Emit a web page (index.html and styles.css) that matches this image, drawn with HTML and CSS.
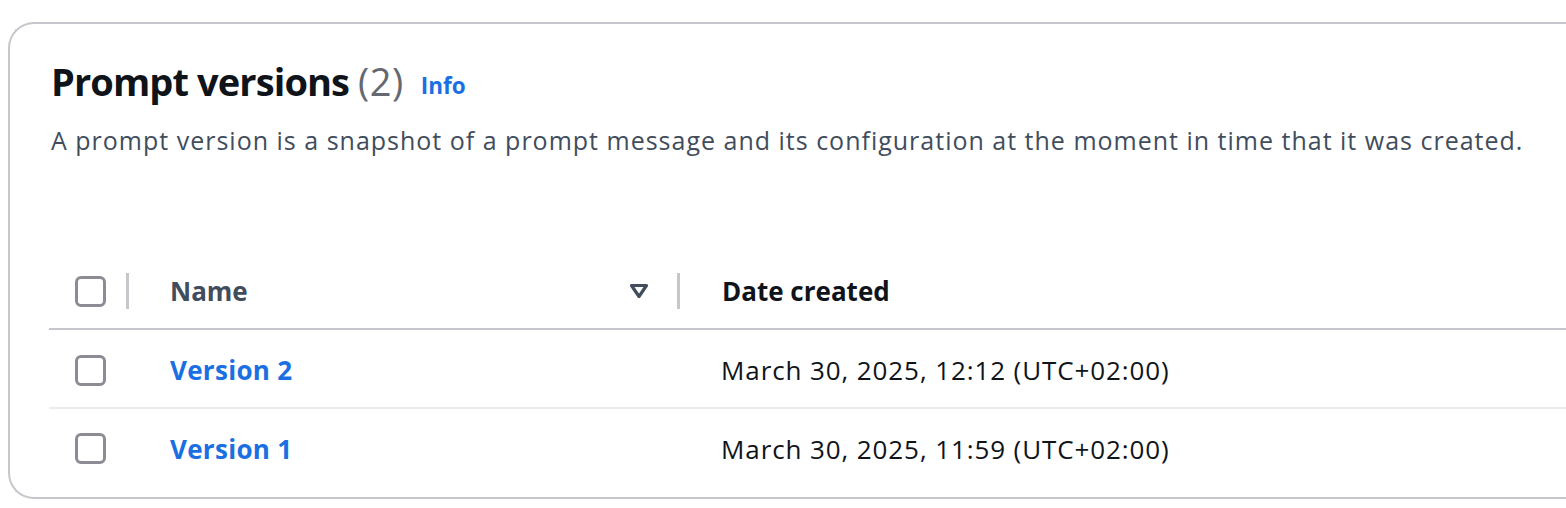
FILE: index.html
```html
<!DOCTYPE html>
<html>
<head>
<meta charset="utf-8">
<link rel="stylesheet" href="styles.css">
</head>
<body>
<div class="panel">
  <div class="header">
    <h2 class="title">Prompt versions <span class="count">(2)</span><a class="info" href="#">Info</a></h2>
    <p class="desc">A prompt version is a snapshot of a prompt message and its configuration at the moment in time that it was created.</p>
  </div>
  <div class="table">
    <div class="row head">
      <div class="cell c-check"><span class="box"></span></div>
      <div class="cell c-name"><span>Name</span>
        <svg class="sort" width="20" height="16" viewBox="0 0 20 16"><path d="M2.5 2.5 H17.5 L10 13.5 Z" fill="none" stroke="#414d5c" stroke-width="3.2" stroke-linejoin="round"/></svg>
      </div>
      <div class="cell c-date">Date created</div>
    </div>
    <div class="row">
      <div class="cell c-check"><span class="box"></span></div>
      <div class="cell c-name"><a class="link" href="#">Version 2</a></div>
      <div class="cell c-date">March 30, 2025, 12:12 (UTC+02:00)</div>
    </div>
    <div class="row last">
      <div class="cell c-check"><span class="box"></span></div>
      <div class="cell c-name"><a class="link" href="#">Version 1</a></div>
      <div class="cell c-date">March 30, 2025, 11:59 (UTC+02:00)</div>
    </div>
  </div>
</div>
</body>
</html>
```
FILE: styles.css
```css
* { box-sizing: border-box; }
html, body { margin: 0; padding: 0; background: #fff; }
body {
  font-family: "Open Sans", "Noto Sans", sans-serif;
  color: #0f141a;
  overflow: hidden;
}
.panel {
  margin: 22px 0 0 8px;
  width: 1620px;
  height: 477px;
  border: 2px solid #c6c6cd;
  border-right: none;
  border-radius: 26px 0 0 26px;
  padding: 0 0 0 41px;
}
.header { padding-top: 33px; }
.title {
  margin: 0;
  font-size: 38px;
  line-height: 48px;
  font-weight: 700;
  color: #0f141a;
  letter-spacing: -0.9px;
}
.count { font-weight: 400; color: #656871; letter-spacing: 0.5px; }
.info {
  font-size: 22.5px;
  font-weight: 700;
  color: #1a6fe3;
  text-decoration: none;
  margin-left: 17px;
  letter-spacing: 0;
  vertical-align: 2px;
}
.desc {
  margin: 14px 0 0 0;
  font-size: 25px;
  line-height: 32px;
  color: #414d5c;
  letter-spacing: 1px;
}
.table { margin-top: 106px; margin-left: -2px; }
.row {
  display: flex;
  align-items: center;
  height: 79px;
  padding-top: 3px;
  border-bottom: 2px solid #e9ebed;
  font-size: 26px;
  letter-spacing: 0.9px;
}
.row.head {
  height: 68px;
  padding-top: 0;
  padding-bottom: 8px;
  border-bottom-color: #c6c6cd;
  font-weight: 700;
  letter-spacing: 0;
}
.row.last { border-bottom: none; padding-top: 0; }
.cell { display: flex; align-items: center; height: 36px; }
.c-check { width: 80px; padding-left: 26px; }
.c-name { width: 550px; padding-left: 41px; }
.c-date { padding-left: 42px; }
.head .c-check, .head .c-name { border-right: 3px solid #c6c6cd; }
.head .c-check { width: 80px; }
.head .c-name { width: 551px; justify-content: space-between; padding-right: 28px; color: #414d5c; }
.box {
  display: block;
  width: 31px;
  height: 31px;
  border: 3px solid #8c8c94;
  border-radius: 6px;
}
.link { color: #1a6fe3; font-weight: 700; text-decoration: none; letter-spacing: 0.3px; }
.sort { display: block; }
```
